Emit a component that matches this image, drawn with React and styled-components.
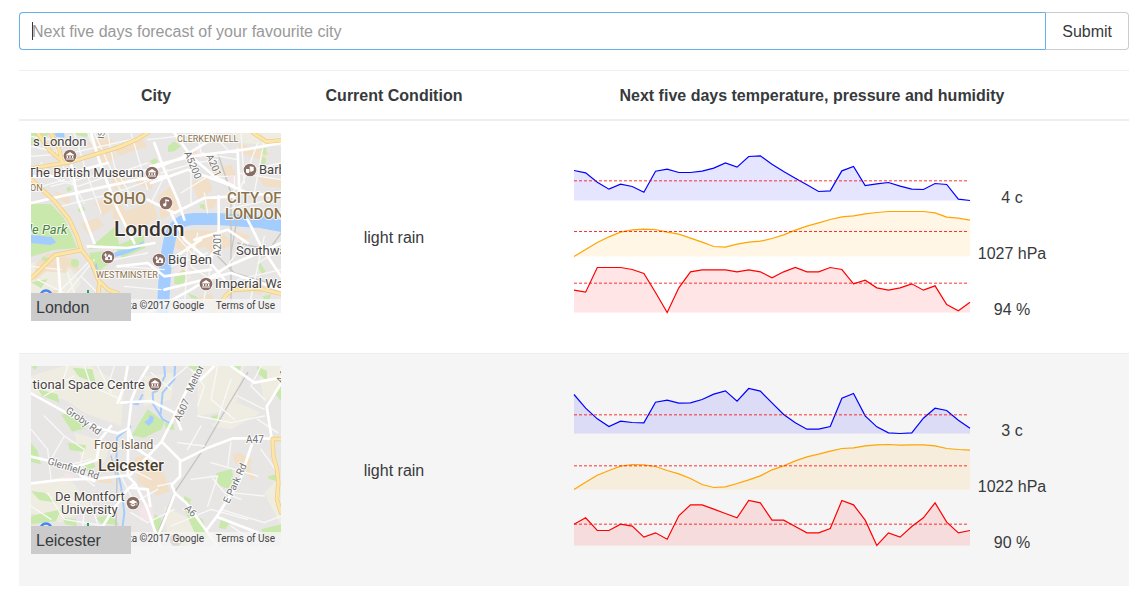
import React from 'react';
import styled, { createGlobalStyle } from 'styled-components';

const GlobalStyle = createGlobalStyle`
  *, *::before, *::after { box-sizing: border-box; }
  body {
    margin: 0;
    background: #fff;
    color: #373a3c;
    font: 16px/24px "Liberation Sans", Arial, sans-serif;
  }
`;

const Page = styled.main`
  padding: 12px 12px 10px 19px;
`;

const SearchForm = styled.form`
  display: flex;
  margin-bottom: 20px;
`;

const SearchField = styled.label`
  position: relative;
  flex: 1;
  display: flex;

  &::after {
    content: '';
    position: absolute;
    left: 13px;
    top: 10px;
    width: 1px;
    height: 18px;
    background: #373a3c;
  }
`;

const SearchInput = styled.input`
  flex: 1;
  min-width: 0;
  height: 38px;
  padding: 7px 12px 5px;
  border: 1px solid #66afe9;
  border-right: 0;
  border-radius: 4px 0 0 4px;
  outline: none;
  background: #fff;
  color: #55595c;
  font: inherit;

  &::placeholder { color: #999; opacity: 1; }
`;

const SubmitButton = styled.button`
  height: 38px;
  padding: 7px 16px 5px;
  border: 1px solid #ccc;
  border-left-color: #66afe9;
  border-radius: 0 4px 4px 0;
  background: #fff;
  color: #373a3c;
  font: inherit;
  cursor: pointer;
`;

const WeatherTable = styled.table`
  width: 100%;
  border-collapse: separate;
  border-spacing: 0;
  text-align: center;
`;

const HeadCell = styled.th`
  width: ${(p) => p.$width || 'auto'};
  padding: 13px 12px 11px;
  border-top: 1px solid #eceeef;
  border-bottom: 2px solid #eceeef;
  font-weight: bold;
`;

const Row = styled.tr`
  background: ${(p) => (p.$striped ? '#f5f5f5' : '#fff')};
`;

const Cell = styled.td`
  padding: 12px;
  vertical-align: middle;

  tr + tr > & { border-top: 1px solid #eceeef; }
`;

const MapCard = styled.div`
  width: 250px;
  text-align: left;
`;

const MapDrawing = styled.svg`
  display: block;
  width: 250px;
  height: 180px;
`;

const CityName = styled.div`
  position: relative;
  width: 100px;
  margin: -20px 0 20px;
  padding: 3px 5px 1px;
  background: #cbcbcb;
`;

const Condition = styled.div`
  padding-top: 2px;
`;

const ChartGrid = styled.div`
  display: grid;
  grid-template-columns: 400px 76px;
  grid-auto-rows: 56px;
  justify-content: center;
`;

const ChartDrawing = styled.svg`
  display: block;
  width: 396px;
  height: 56px;
  overflow: visible;
`;

const Reading = styled.div`
  padding-top: 33px;
  white-space: nowrap;
`;

const MAX = 135;
const HEIGHT = 45;
const BASE = 47.5;

function Sparkline({ values, mean, color, label }) {
  const y = (v) => BASE - (v / MAX) * HEIGHT;
  const points = values.map((v, i) => `${((i * 396) / (values.length - 1)).toFixed(2)},${y(v).toFixed(2)}`).join(' ');
  return (
    <ChartDrawing viewBox="0 0 396 56" role="img" aria-label={label}>
      <polygon points={`0,${BASE} ${points} 396,${BASE}`} fill={color} fillOpacity="0.1" />
      <polyline points={points} fill="none" stroke={color} strokeWidth="1.2" />
      <line x1="0" x2="394" y1={y(mean)} y2={y(mean)} stroke="red" strokeOpacity="0.8" strokeWidth="1" strokeDasharray="3 2" />
    </ChartDrawing>
  );
}

function Poi({ x, y, kind }) {
  return (
    <g transform={`translate(${x} ${y})`}>
      <circle r="7" fill="#fff" opacity="0.8" />
      <circle r="6.3" fill="#8a6d64" />
      <g fill="#fff">
        {kind === 'museum' && <path d="M-4-1.3 0-4 4-1.3V-.5H-4ZM-3.3 0h1.3v2h-1.3ZM-.6 0H.6v2H-.6ZM2 0h1.3v2H2ZM-4 2.5h8v1h-8Z" />}
        {kind === 'music' && <path d="M-.7-3.8 3-3v1.6L.4-2v4a1.7 1.6 0 1 1-1.1-1.5Z" />}
        {kind === 'camera' && <path fillRule="evenodd" d="M-4.2-2.5h1.2v-1.2h1v1.2h1.2v1h-1.2v1.2h-1v-1.2h-1.2ZM.2-2.5h1.8l.7 1h1.4v4.6h-7V.6h1v-1H0ZM1 .1a1.2 1.2 0 1 0 0 2.4 1.2 1.2 0 0 0 0-2.4Z" />}
        {kind === 'theatre' && <path d="M-4-1h3.5v3.2q-1.8 1.8-3.5 0ZM-.2-3.7 3.7-3v3.6Q1.5 2.4.2 1.4V-1.6h-.6Z" />}
        {kind === 'school' && <path d="M0-3.2 4.3-1 0 1.2-4.3-1ZM-2.4.8 0 2 2.4.8v1.4L0 3.4-2.4 2.2ZM3.6-.6h.7v3h-.7Z" />}
      </g>
    </g>
  );
}

function MapFrame({ name, shapes, labels, pois }) {
  return (
    <MapDrawing viewBox="0 0 250 180" role="img" aria-label={`Map of ${name}`}>
      <svg width="250" height="180" viewBox="0 0 750 540">
        <rect width="750" height="540" fill="#e8e6e5" />
        <g fill="none" strokeLinecap="round" strokeLinejoin="round">
          <path d={shapes.pale} fill="#efece2" />
          <path d={shapes.built} fill="#f1dfc7" />
          <path d={shapes.pink} fill="#f4e5e8" />
          <path d={shapes.parks} fill="#c9e8ab" />
          <path d={shapes.lakes} fill="#a3ccff" />
          <path d={shapes.river} stroke="#a3ccff" strokeWidth={shapes.riverWidth} strokeLinecap="butt" />
          <path d={shapes.rail} stroke="#c5c5c5" strokeWidth="4" />
          <path d={shapes.lanes} stroke="#f8f8f8" strokeWidth="4" />
          <path d={shapes.streets} stroke="#fff" strokeWidth="8" />
          <path d={shapes.highways} stroke="#eccb86" strokeWidth="13" />
          <path d={shapes.highways} stroke="#fce5a6" strokeWidth="9" />
        </g>
      </svg>
      {pois.map(([x, y, kind]) => <Poi key={`${x}-${y}`} x={x} y={y} kind={kind} />)}
      <g fontFamily='Roboto, "Liberation Sans", sans-serif' stroke="#fff" strokeOpacity="0.8" strokeWidth="2" strokeLinejoin="round" paintOrder="stroke">
        {labels.map(({ t, x, y, size = 13, fill = '#484443', weight = 400, turn = 0, anchor = 'start', italic }) => (
          <text key={`${t}${x}`} transform={`translate(${x} ${y}) rotate(${turn})`} fontSize={size} fill={fill} fontWeight={weight} textAnchor={anchor} fontStyle={italic ? 'italic' : 'normal'}>{t}</text>
        ))}
      </g>
      <circle cx="15" cy="163" r="5.5" fill="none" stroke="#4285f4" strokeWidth="2.5" />
      <path d="M57 157v8" stroke="#20a565" strokeWidth="2" />
      <rect x="68" y="166" width="182" height="14" fill="#f5f5f5" fillOpacity="0.8" />
      <g fontFamily='Roboto, "Liberation Sans", sans-serif' fontSize="10" fill="#444">
        <text x="173" y="176" textAnchor="end">Map data ©2017 Google</text>
        <text x="244" y="176" textAnchor="end">Terms of Use</text>
      </g>
    </MapDrawing>
  );
}

const brown = '#8b734b';
const road = '#737373';

const cities = [
  {
    name: 'London',
    condition: 'light rain',
    map: {
      shapes: {
        pale: 'M0 390 90 370 150 450 90 540H0ZM600 0H750V40L640 30Z',
        built:
          'M60 110h50v20h-50ZM170 30l60-20 20 20-60 30ZM250 40l80-30 20 30-90 30ZM200 70l45-15 10 20-40 25ZM70 175l40 10 10 30-30-10ZM240 140l35-15 15 30-40 15ZM190 210l40-15 20 30-35 25ZM150 270l50-15 20 20-50 30ZM250 195l35 40 80-30 15 50-60 40-75-40ZM300 110l60 20 5 40-50-20ZM380 190l40-30 25 70-55 30ZM460 70l30-20 20 15-25 25ZM480 150l50-20 15 40-40 35ZM520 200l40-5-10 30-30 5ZM570 105l30-10 15 30-35 5ZM620 30l100 30-30 20-60-20ZM610 240l40-10 40 25-60 5ZM540 95l20-5 15 35-25 5ZM680 130l70 10v25l-50-5ZM420 300l60-10 90 5 40 40-70 25-20-20-60 20-40-25ZM600 290l60 20-30 20ZM15 390l35-30 70 15-15 45-60-5-35 30ZM100 370l40 10 5 35-30-10ZM20 480l60-10 30 20-70 20ZM620 470l80-15-10 30ZM480 500l60-20 20 40h-70Z',
        pink: 'M590 130l25-5 5 30-25 5ZM430 410l40-35 10 60-45 40ZM500 50l20 5-5 20-20-5ZM350 90l30-10 5 20-30 5Z',
        parks:
          'M0 0H55L40 20 0 40ZM130 0h45l-8 12-30-5ZM0 212l60 2 38 40 22 45 18 46-70 6-68 20ZM106 165l12-5 5 12-14 4ZM140 228l16-8 8 12-20 6ZM170 350l85-72 10 62-90 8ZM250 340l88-35 5 40-70 30ZM175 360l40-5 28 30-40 30-25-30ZM120 390a12 12 0 1 0 24 0 12 12 0 1 0-24 0ZM35 370l20 5-8 12-15-5ZM410 40l20-15 20 15-20 15-18 2ZM357 85l15-10 10 10-15 15ZM690 45h16v20l-14-2ZM692 72l14 4-4 20h-12ZM505 215l14-3 4 18-14-5ZM430 430l25-20 18 10-18 40-25-8ZM470 480l25 10 5 10-20-5ZM678 395l10-4 16 24-10 12ZM0 448l50-10-20 28ZM695 490l25-6-4 14-15 4Z',
        lakes:
          'M70 0h30l0 14-25-3ZM0 306l62 6 14 16-18 8-58-6ZM230 370l30-15 40-10 40-22-10 20-40 18-40 12ZM178 408l20-18 2 20Z',
        river: 'M756 280 690 267 562 258H490C430 258 418 300 412 340C400 390 402 450 394 540',
        riverWidth: 36,
        rail: 'M560 60 600 180V540M620 250 600 360M560 370 610 420 750 460M750 300 715 350 620 330',
        lanes:
          'M60 0 90 90 160 210M0 70 120 60 300 20M30 90 60 130 140 160 350 90M130 0 170 130 210 240M230 0 250 100 300 190M170 0 210 90M300 0 350 170M60 160 260 110M90 220 250 180 390 130M190 0 290 220M0 170 100 140M350 20 530 0M390 120 490 90 560 80M500 0 510 60 620 80M540 0 590 50M630 0 640 150M680 30 620 190M700 20 670 180M750 90 660 110M750 140 620 120M450 180 530 130 590 130M480 210 480 100M360 210 410 110M580 230 720 200M530 240 520 180M610 220V130M0 400 90 410M20 440 100 480M110 420 150 540M60 500 180 380M190 380 60 540M150 430 260 540M250 380 350 360M270 400 400 410M280 460 390 470M420 400 530 360M430 300 490 370M470 340 460 540M500 300 480 400 540 440M560 300 510 540M640 320 590 400M700 310 650 540M750 350 680 390M560 540 620 440 750 410M430 500 560 500M0 10 120 30M0 40 70 55',
        streets:
          'M0 210 180 170 320 140 400 130M180 0 210 100 260 230 310 330M260 130 360 110 450 75 540 20M0 130 80 130 230 90M120 90 140 200 190 330M350 200 430 240 520 195 610 190M370 30 400 110 440 200 460 260M360 150 470 110 580 150 650 180M360 100 480 70 640 50 750 30M430 0 480 70 550 130 610 160M620 50 625 180M563 190V340L530 380M170 340 290 345 370 330M80 375 90 500M260 400 350 390 400 430 540 410M400 470 600 420 750 470M350 540 480 470 590 400 750 330M420 240 460 320 530 380 580 440M490 320 590 290 650 330M650 260 690 340 750 430M420 380 510 320M650 180 750 190',
        highways:
          'M0 106 115 88 200 62 260 44 320 18 350 0M20 0 58 55 95 85M60 0 85 50 92 85M0 138 72 206 115 260 138 310 152 351 182 390 202 441 232 471 260 480M152 351 72 366 27 411 0 436M205 450 200 500M582 491 602 471 682 466 750 482M667 0 707 26 750 22M582 491 550 540',
      },
      labels: [
        { t: 's London', x: 2, y: 13 },
        { t: 'The British Museum', x: 113, y: 44, anchor: 'end' },
        { t: 'ON', x: -1, y: 58, size: 9, fill: brown },
        { t: 'CLERKENWELL', x: 146, y: 9, size: 9, fill: brown },
        { t: 'SOHO', x: 72, y: 71, size: 16, fill: brown, weight: 500 },
        { t: 'CITY OF', x: 196, y: 70, size: 15, fill: brown, weight: 500 },
        { t: 'LONDON', x: 194, y: 86, size: 15, fill: brown, weight: 500 },
        { t: 'London', x: 83, y: 103, size: 21, fill: '#3a322d', weight: 500 },
        { t: 'de Park', x: -6, y: 101, fill: '#48833f', italic: true },
        { t: 'WESTMINSTER', x: 65, y: 145, size: 9, fill: brown },
        { t: 'Big Ben', x: 137, y: 131 },
        { t: 'Barbican', x: 228, y: 41 },
        { t: 'Southwark', x: 205, y: 122 },
        { t: 'Imperial War', x: 184, y: 155 },
        { t: 'A5200', x: 153, y: 20, size: 10, fill: road, turn: 67 },
        { t: 'A201', x: 175, y: 23, size: 10, fill: road, turn: 66 },
        { t: 'A201', x: 190, y: 123, size: 10, fill: road, turn: -90 },
        { t: 'IS', x: 73, y: 6, size: 9, fill: road, turn: -85 },
      ],
      pois: [[39, 23, 'museum'], [121, 40, 'museum'], [135, 70, 'music'], [219, 37, 'theatre'], [77, 124, 'camera'], [128, 127, 'camera'], [175, 151, 'museum']],
    },
    charts: [
      { kind: 'temperature', color: 'blue', reading: '4 c', mean: 59, values: [90, 83, 55, 34, 49, 42, 25, 88, 94, 84, 84, 88, 97, 113, 100, 132, 134, 109, 87, 67, 47, 27, 29, 89, 102, 45, 50, 54, 43, 34, 33, 51, 48, 4, 0] },
      { kind: 'pressure', color: 'orange', reading: '1027 hPa', mean: 75, values: [0, 21, 42, 59, 73, 80, 82, 81, 73, 67, 55, 43, 30, 28, 37, 43, 46, 54, 65, 79, 91, 101, 111, 119, 122, 128, 132, 135, 135, 135, 135, 131, 118, 115, 109] },
      { kind: 'humidity', color: 'red', reading: '94 %', mean: 88, values: [67, 61, 135, 135, 135, 129, 117, 60, 0, 74, 122, 128, 128, 128, 122, 128, 122, 104, 122, 135, 122, 122, 135, 129, 86, 97, 74, 67, 74, 86, 67, 80, 24, 5, 31] },
    ],
  },
  {
    name: 'Leicester',
    condition: 'light rain',
    map: {
      shapes: {
        pale: 'M0 30 100 0H180L280 60 270 180 160 140 100 100 0 80ZM340 30 430 20 420 100 340 120ZM500 0H640L610 130 500 150ZM0 350 110 330 180 420 90 470 0 440ZM400 420 520 480 560 540H410ZM540 180 620 110 690 140 600 190ZM130 200 240 230 220 290 150 280ZM680 0H750V60L700 110ZM700 380 750 330V480Z',
        built: 'M310 275l40-8 10 35 40 20 16 55-38 12-58-42ZM605 265l20-5 40 22-12 25-42-15ZM635 300l18-2 20 40-12 4ZM190 330l50 8 5 15-45-5Z',
        pink: 'M325 430l32-25 16 55-45 5ZM100 320l35 10-30 10Z',
        parks:
          'M302 208 350 130 400 168 392 190 338 216ZM124 5l60 5 10 40-50-18ZM20 70l60 15 5 25-50-20ZM90 145l45-3 28 45-40 10ZM0 0l20 0-8 12ZM0 230l20 25 10 40-30-8ZM110 230l55 8-3 20-45-5ZM160 290l22-8 12 20-28 14ZM555 322l48-14 4 34-16 26-30-10ZM712 330l25-5v20l-24-6ZM540 150l22-4 6 14-22 2ZM730 80l20-25v50ZM600 0l30 0-5 20ZM678 0l30 15 0 30-25-20ZM400 170l28 4 2 18-25-2ZM460 390l20 10-5 20-18-10ZM460 430l55 30 20 60-40-10ZM370 445l20 10 5 50-26-14ZM195 455l45-8 25 30-55-5ZM0 375l40 5 40 30-55-8ZM0 450l90-20-15 35-75 10ZM95 455l40 5 2 20-35-5ZM570 460l25 12-12 18-20-5ZM430 520l30-12 12 32h-42ZM690 490l60-15v30l-50 8ZM5 500l60-15 10 30-60 10ZM470 0h40l-10 20Z',
        lakes: 'M340 168l14-10 2-12 12 8-2 14-14 12Z',
        river: 'M400 0 402 30 378 75 365 80 367 115 395 160 418 172M432 0 430 40 395 80 388 150M290 110 320 115 335 85M300 180 258 215 256 300 270 360 275 400 280 440 275 480',
        riverWidth: 6,
        rail: 'M650 20 590 120 510 260 430 380 380 500M255 480 258 340 240 270',
        lanes:
          'M0 40 70 60 130 30M110 0 90 60 40 90M160 0 180 60 270 100M200 0 240 80M250 0 230 60 290 50M360 20 420 70M470 0 400 60M480 10 520 60 500 120M560 0 540 100 610 160M600 40 560 160M620 90 700 130M500 150 600 170 700 150M510 180 470 250M440 230 520 240M600 230 590 300M540 290 680 330M540 330 580 380 630 400M600 380 700 390M690 250 740 320M480 340 560 330 530 420M0 190 50 250 60 340M40 150 100 210 160 250M100 210 60 280M100 300 180 280M160 250 140 320 190 360M240 260 300 230 380 240M260 290 360 340M260 310 300 390M200 400 310 410 380 370M90 380 160 430 150 540M0 420 60 460M50 380 100 460 220 480M180 410 220 540M300 440 350 470 430 430M380 360 430 350M420 480 540 430 650 460M570 430 700 470 750 450M530 500 640 540M600 480 690 540M700 100 660 60 690 0M680 160 740 200',
        streets:
          'M352 0 320 55 302 100 292 187 312 245 380 290M0 82 127 152 215 190 260 202 292 187M492 20 422 167 392 227 447 282 447 332 422 357 432 382 467 412 557 537M750 218 607 217 527 247 447 287M0 352 87 342 207 337 297 327 342 280 392 227M0 272 100 295 137 302 197 282 207 222 240 180M140 302 150 330 190 345M290 330 312 352 347 422 387 540M292 187 290 330M432 382 397 472 367 540M662 237 627 342 557 452 527 492M557 452 680 500M750 52 707 122 722 217M180 540 240 440 290 370 312 352M270 110 360 105 430 140 450 190M260 110 280 60 290 0M300 365 350 370 358 420M600 0 670 50 750 35M550 0 510 40',
        highways: 'M749 219H725L727 270 738 310 742 350 738 400 750 440',
      },
      labels: [
        { t: 'tional Space Centre', x: 114, y: 23, anchor: 'end' },
        { t: 'Frog Island', x: 63, y: 83, size: 12, fill: '#6d5a47' },
        { t: 'Leicester', x: 67, y: 105, size: 16, fill: '#4b402d', weight: 500 },
        { t: 'De Montfort', x: 24, y: 135 },
        { t: 'University', x: 30, y: 148 },
        { t: 'Groby Rd', x: 34, y: 46, size: 10, fill: road, turn: 35 },
        { t: 'Glenfield Rd', x: 16, y: 98, size: 10, fill: road, turn: 17 },
        { t: 'Melton', x: 161, y: 27, size: 10, fill: road, turn: -65 },
        { t: 'A607', x: 149, y: 56, size: 10, fill: road, turn: -65 },
        { t: 'A47', x: 215, y: 77, size: 10, fill: road },
        { t: 'E Park Rd', x: 198, y: 138, size: 10, fill: road, turn: -65 },
        { t: 'A6', x: 153, y: 143, size: 10, fill: road, turn: 45 },
        { t: 'A47', x: 251, y: 18, size: 10, fill: road, turn: -65 },
      ],
      pois: [[124, 18, 'museum'], [102, 137, 'school'], [145, 174, 'camera']],
    },
    charts: [
      { kind: 'temperature', color: 'blue', reading: '3 c', mean: 56, values: [117, 76, 44, 21, 37, 33, 32, 94, 100, 91, 92, 102, 118, 128, 97, 135, 127, 92, 57, 32, 13, 13, 21, 106, 120, 53, 20, 2, 0, 2, 46, 76, 69, 40, 16] },
      { kind: 'pressure', color: 'orange', reading: '1022 hPa', mean: 71, values: [0, 22, 43, 57, 70, 75, 74, 69, 57, 47, 33, 15, 6, 8, 18, 29, 41, 59, 71, 86, 98, 106, 115, 123, 125, 131, 134, 135, 133, 134, 134, 131, 123, 120, 118] },
      { kind: 'humidity', color: 'red', reading: '90 %', mean: 64, values: [64, 83, 45, 45, 64, 58, 25, 38, 19, 89, 122, 122, 109, 96, 83, 135, 128, 76, 76, 57, 38, 38, 51, 135, 122, 76, 0, 38, 25, 57, 83, 128, 70, 38, 45] },
    ],
  },
];

export default function App() {
  return (
    <Page>
      <GlobalStyle />
      <SearchForm onSubmit={(e) => e.preventDefault()}>
        <SearchField>
          <SearchInput type="text" aria-label="City" placeholder="Next five days forecast of your favourite city" />
        </SearchField>
        <SubmitButton type="submit">Submit</SubmitButton>
      </SearchForm>
      <WeatherTable>
        <thead>
          <tr>
            <HeadCell $width="274px">City</HeadCell>
            <HeadCell $width="202px">Current Condition</HeadCell>
            <HeadCell>Next five days temperature, pressure and humidity</HeadCell>
          </tr>
        </thead>
        <tbody>
          {cities.map((city, i) => (
            <Row key={city.name} $striped={i % 2 === 1}>
              <Cell>
                <MapCard>
                  <MapFrame name={city.name} {...city.map} />
                  <CityName>{city.name}</CityName>
                </MapCard>
              </Cell>
              <Cell><Condition>{city.condition}</Condition></Cell>
              <Cell>
                <ChartGrid>
                  {city.charts.map((chart) => (
                    <React.Fragment key={chart.kind}>
                      <Sparkline values={chart.values} mean={chart.mean} color={chart.color} label={`${city.name} ${chart.kind}`} />
                      <Reading>{chart.reading}</Reading>
                    </React.Fragment>
                  ))}
                </ChartGrid>
              </Cell>
            </Row>
          ))}
        </tbody>
      </WeatherTable>
    </Page>
  );
}
